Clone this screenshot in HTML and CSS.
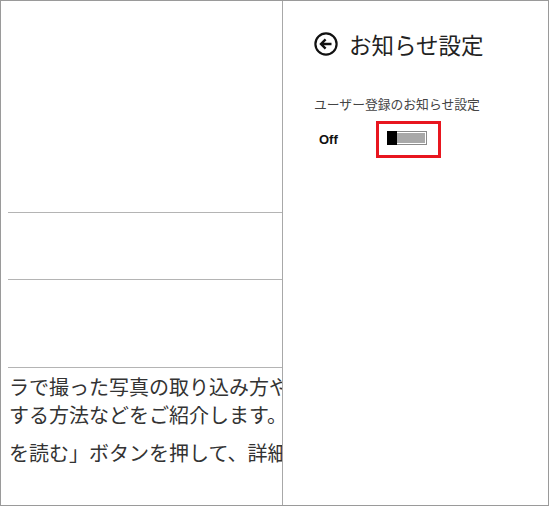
FILE: index.html
```html
<!DOCTYPE html>
<html lang="ja">
<head>
<meta charset="utf-8">
<title>お知らせ設定</title>
<link rel="stylesheet" href="styles.css">
</head>
<body>
<div class="frame">
  <div class="page">
    <div class="rule rule-1"></div>
    <div class="rule rule-2"></div>
    <div class="rule rule-3"></div>
    <div class="body-text">
      <p class="para">ラで撮った写真の取り込み方や<br>する方法などをご紹介します。</p>
      <p class="para para-2">を読む」ボタンを押して、詳細</p>
    </div>
  </div>
  <div class="flyout">
    <div class="flyout-header">
      <svg class="back-icon" viewBox="0 0 24 24" width="24" height="24" aria-hidden="true">
        <circle cx="12" cy="12" r="10.6" fill="none" stroke="#111" stroke-width="2.2"/>
        <path d="M17.5 12 H7.2 M11.6 7.4 L7 12 L11.6 16.6" fill="none" stroke="#111" stroke-width="2.4" stroke-linecap="butt" stroke-linejoin="miter"/>
      </svg>
      <h1 class="flyout-title">お知らせ設定</h1>
    </div>
    <div class="setting-label">ユーザー登録のお知らせ設定</div>
    <div class="setting-row">
      <span class="state-label">Off</span>
      <div class="highlight">
        <div class="toggle">
          <div class="toggle-thumb"></div>
          <div class="toggle-track"></div>
        </div>
      </div>
    </div>
  </div>
</div>
</body>
</html>
```

FILE: styles.css
```css
html, body {
  margin: 0;
  padding: 0;
  background: #ffffff;
}

.frame {
  width: 549px;
  height: 506px;
  box-sizing: border-box;
  border: 1px solid #9a9a9a;
  display: flex;
  overflow: hidden;
  font-family: "Noto Sans CJK JP", "Noto Sans", sans-serif;
  color: #333333;
}

.page {
  width: 282px;
  flex: none;
  box-sizing: border-box;
  padding-left: 7px;
  border-right: 1px solid #a8a8a8;
  overflow: hidden;
}

.rule {
  height: 1px;
  background: #b4b4b4;
}

.rule-1 { margin-top: 211px; }
.rule-2 { margin-top: 66px; }
.rule-3 { margin-top: 87px; }

.body-text {
  padding-top: 5px;
}

.para {
  margin: 0;
  font-size: 20px;
  line-height: 28px;
  white-space: nowrap;
  color: #333333;
  padding-left: 1px;
}

.para-2 {
  margin-top: 10px;
}

.flyout {
  flex: 1;
  padding: 29px 0 0 31px;
  box-sizing: border-box;
}

.flyout-header {
  display: flex;
  align-items: center;
  height: 28px;
}

.back-icon {
  width: 24px;
  height: 24px;
  flex: none;
}

.flyout-title {
  margin: 0 0 0 11px;
  font-size: 22.5px;
  font-weight: 400;
  line-height: 28px;
  color: #222222;
  white-space: nowrap;
}

.setting-label {
  margin-top: 37px;
  font-size: 12.8px;
  line-height: 18px;
  color: #444444;
  white-space: nowrap;
}

.setting-row {
  display: flex;
  align-items: center;
  margin-top: 8px;
}

.state-label {
  width: 62px;
  flex: none;
  padding-left: 5px;
  box-sizing: border-box;
  font-family: "Liberation Sans", Arial, sans-serif;
  font-weight: 700;
  font-size: 13px;
  color: #111111;
}

.highlight {
  width: 65px;
  height: 37px;
  box-sizing: border-box;
  border: 3px solid #e8161f;
  padding: 7px 0 0 8px;
}

.toggle {
  display: flex;
  width: 40px;
  height: 14px;
}

.toggle-thumb {
  width: 10px;
  height: 14px;
  background: #000000;
  flex: none;
}

.toggle-track {
  flex: 1;
  box-sizing: border-box;
  height: 14px;
  border: 1px solid #8a8a8a;
  border-left: none;
  background: #a8a8a8;
  box-shadow: inset 0 1px 0 #ffffff, inset -1px -1px 0 #ffffff;
}
```
